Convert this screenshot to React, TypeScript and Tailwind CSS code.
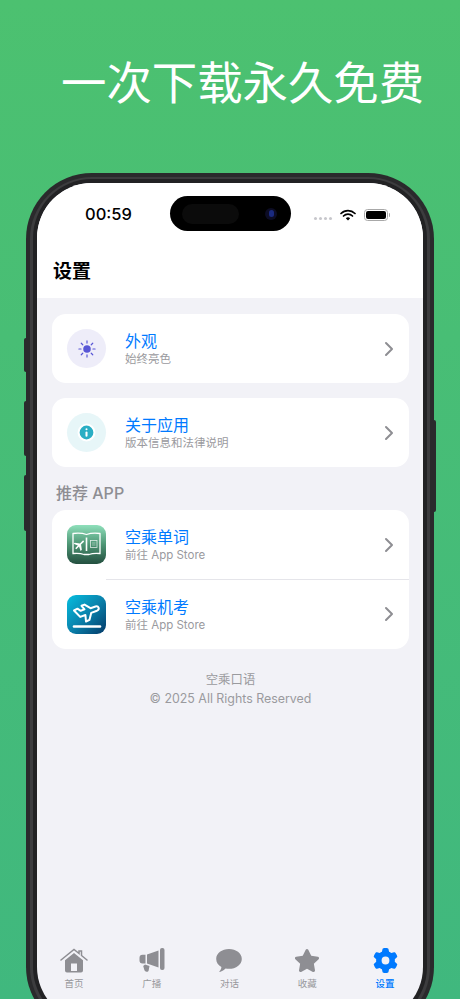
import React from "react";
import { ChevronRight, Info } from "lucide-react";
import { FaStar } from "react-icons/fa";
import { FaGear } from "react-icons/fa6";

const FONT = "font-['Inter','Noto_Sans_CJK_SC',sans-serif]";

function SunIcon() {
  return (
    <svg viewBox="0 0 20 20" className="w-[18px] h-[18px]" fill="none" stroke="#5856d6" strokeWidth="1.3" strokeLinecap="round">
      <circle cx="10" cy="10" r="4.2" fill="#5856d6" stroke="none" />
      <path d="M10 1v2.4M10 16.6V19M1 10h2.4M16.6 10H19M3.6 3.6l1.7 1.7M14.7 14.7l1.7 1.7M3.6 16.4l1.7-1.7M14.7 5.3l1.7-1.7" />
    </svg>
  );
}

function BookIcon() {
  return (
    <div className="w-[39px] h-[39px] rounded-[9px] bg-gradient-to-b from-[#8fe0bb] via-[#4d9574] to-[#245040] flex items-center justify-center">
      <svg viewBox="0 0 39 39" className="w-[39px] h-[39px]" fill="none" stroke="#fff">
        <path d="M6 8.500c4.500-.6 9.500-.4 13.500 1 4-1.400 9-1.600 13.500-1v20c-4-.4-8-.2-11 1h-5c-3-1.200-7-1.400-11-1z" strokeWidth="1.300" />
        <path d="M19.500 12.500v13.500" strokeWidth="1.600" />
        <path transform="rotate(-45 13 19.500)" d="M7 18.700h3.800l-1.900-4.200h1.700l3.100 4.200h3.800c1.100 0 1.100 1.600 0 1.600h-3.800l-3.100 4.200h-1.700l1.900-4.200H7z" fill="#fff" stroke="none" />
        <rect x="23.500" y="15.500" width="6.500" height="7" strokeWidth="0.800" opacity="0.8" />
        <path d="M25 18h3.500M25 20h3.500" strokeWidth="0.600" opacity="0.7" />
      </svg>
    </div>
  );
}

function PlaneIcon() {
  return (
    <div className="w-[39px] h-[39px] rounded-[9px] bg-gradient-to-br from-[#04bfe0] via-[#0a83ad] to-[#053a68] flex items-center justify-center">
      <svg viewBox="0 0 39 39" className="w-[39px] h-[39px]" fill="none" stroke="#fff" strokeLinejoin="round">
        <path d="M7 15.500l3.500-1.800 3.200 2.100 3.800-1.400-3-3.600 3-1.200 6 3.600 5-1.700c3-.9 4.700 2.600 1.500 4.200l-5.800 2.200-1.700 6.900-3.500 1.700-.6-6.500-5.200 1.900z" strokeWidth="2" />
        <path d="M7 31.500h26" strokeWidth="2.600" strokeLinecap="round" />
      </svg>
    </div>
  );
}

function HomeIcon() {
  return (
    <svg viewBox="0 0 28 24" className="h-[25px] w-[28px]" fill="#8e8e93">
      <path d="M1 11.500L14 1l5 4V2.500h2.500V7L27 11.500" fill="none" stroke="#8e8e93" strokeWidth="1.500" strokeLinecap="round" />
      <path fillRule="evenodd" d="M14 4.500l9 7.300V22a2 2 0 0 1-2 2H7a2 2 0 0 1-2-2V11.800zM11 15v7.500h6V15z" />
    </svg>
  );
}

function MegaphoneIcon() {
  return (
    <svg viewBox="0 0 26 25" className="h-[25px] w-[26px]" fill="#8e8e93">
      <rect x="21" y="0" width="4.500" height="22" rx="2" />
      <path d="M19.500 2.500v17L8 15.500V6.500z" />
      <path d="M6.500 6.800v8.600H3.500A3 3 0 0 1 .5 12.400V9.800a3 3 0 0 1 3-3z" />
      <path d="M6 16.500l4.500 1.600-.8 4.200c-.3 1.400-1.600 1.900-2.800 1.300-1-.5-1.400-1.300-1.700-2.200l-1-3.400z" />
    </svg>
  );
}

function ChatIcon() {
  return (
    <svg viewBox="0 0 26 24" className="h-[24px] w-[26px]" fill="#8e8e93">
      <path d="M13 0c7 0 12.800 4.300 12.800 9.900S20 19.800 13 19.800c-1.200 0-2.300-.1-3.400-.4-1.400 1.400-3.500 2.800-5.700 3.500-.5.100-.7-.3-.4-.6 1-1.100 1.700-2.400 1.900-4.400C2.300 16.400.2 13.300.2 9.900.2 4.300 6 0 13 0z" />
    </svg>
  );
}

function StatusIcons() {
  return (
    <div className="flex items-center">
      <div className="flex gap-[1.500px] mt-[8px] mr-[8px]">
        {[0, 1, 2, 3].map((i) => (
          <span key={i} className="w-[3.500px] h-[3.500px] rounded-full bg-[#c7c7cc]" />
        ))}
      </div>
      <svg viewBox="0 0 16 12" className="w-[16px] h-[12px] mr-[8px]" fill="none" stroke="#000" strokeLinecap="round">
        <path d="M1 4.500a10 10 0 0 1 14 0" strokeWidth="1.700" />
        <path d="M3.500 7a6.500 6.500 0 0 1 9 0" strokeWidth="1.700" />
        <path d="M8 11.500L5.800 9.200a3.200 3.200 0 0 1 4.400 0z" fill="#000" stroke="none" />
      </svg>
      <div className="w-[24px] h-[12px] rounded-[3.500px] border border-[#a8a8a8] p-[1px]">
        <div className="w-full h-full rounded-[2px] bg-black" />
      </div>
      <div className="w-[1px] h-[4px] bg-[#a8a8a8] ml-[1px] rounded-r-sm" />
    </div>
  );
}

function Row({ icon, title, sub, divider }: { icon: React.ReactNode; title: string; sub: string; divider?: boolean }) {
  return (
    <div className="relative flex-1 flex items-center h-[69px] pl-[15px] pr-[8px]">
      <div className="w-[39px] h-[39px] shrink-0">{icon}</div>
      <div className="ml-[19px] flex-1 min-w-0 pt-[1px]">
        <div className="text-[16px] leading-[20px] text-[#007aff]">{title}</div>
        <div className="text-[11.500px] leading-[16px] text-[#9a9a9e]">{sub}</div>
      </div>
      <ChevronRight className="w-[24px] h-[24px] text-[#8e8e93]" strokeWidth={2} />
      {divider && <div className="absolute left-[54px] right-0 bottom-0 h-px bg-[#e5e5ea]" />}
    </div>
  );
}

function Circle({ bg, children }: { bg: string; children: React.ReactNode }) {
  return <div className={`w-[39px] h-[39px] rounded-full flex items-center justify-center ${bg}`}>{children}</div>;
}

export default function App() {
  const tabs = [
    { label: "首页", icon: <HomeIcon /> },
    { label: "广播", icon: <MegaphoneIcon /> },
    { label: "对话", icon: <ChatIcon /> },
    { label: "收藏", icon: <FaStar className="w-[26px] h-[25px] text-[#8e8e93]" /> },
    { label: "设置", icon: <FaGear className="w-[25px] h-[25px] text-[#007aff]" />, active: true },
  ];

  return (
    <div className={`${FONT} h-[999px] w-[460px] overflow-hidden bg-gradient-to-b from-[#4cc170] to-[#40b87e]`}>
      <div className="h-[173px] pt-[52px] pl-[61px]">
        <h1 className="text-[45.400px] leading-[64px] font-normal text-white whitespace-nowrap">一次下载永久免费</h1>
      </div>

      {/* phone frame */}
      <div className="relative w-[408px] h-[860px] mx-auto rounded-[66px] bg-[#2a2a2c] p-[4px]">
        <span className="absolute left-[-2px] top-[165px] w-[2px] h-[34px] rounded-l-sm bg-[#2a2a2c]" />
        <span className="absolute left-[-2px] top-[228px] w-[2px] h-[55px] rounded-l-sm bg-[#2a2a2c]" />
        <span className="absolute left-[-2px] top-[302px] w-[2px] h-[56px] rounded-l-sm bg-[#2a2a2c]" />
        <span className="absolute right-[-2px] top-[247px] w-[2px] h-[92px] rounded-r-sm bg-[#2a2a2c]" />

        <div className="h-full rounded-[62px] bg-[#3c3c3e] p-[3px] pt-[2px]">
          <div className="h-full rounded-[59px] bg-[#222224] p-[4px]">
            <div className="relative h-full rounded-[55px] overflow-hidden bg-[#f2f2f7] flex flex-col">
              {/* dynamic island */}
              <div className="absolute left-[133px] top-[13px] w-[121px] h-[35px] rounded-full bg-black flex items-center justify-between pl-[12px] pr-[14px]">
                <div className="w-[57px] h-[20px] rounded-full bg-[#0b0b0b]" />
                <div className="w-[12px] h-[12px] rounded-full bg-[#0c0c24] flex items-center justify-center">
                  <div className="w-[5px] h-[7px] rounded-full bg-[#1a2a80]" />
                </div>
              </div>

              <div className="bg-white h-[115px] shrink-0">
                <div className="flex items-center justify-between h-[62px] pl-[48px] pr-[33px] pt-[1px]">
                  <span className="text-[16.500px] font-medium text-black">00:59</span>
                  <StatusIcons />
                </div>
                <div className="pl-[16px] pt-[13px] text-[19px] leading-[28px] font-bold text-black">设置</div>
              </div>

              <div className="flex-1 pl-[15px] pr-[14px] pt-[16px]">
                <div className="flex bg-white rounded-[14px]">
                  <Row icon={<Circle bg="bg-[#eeedf9]"><SunIcon /></Circle>} title="外观" sub="始终亮色" />
                </div>
                <div className="flex bg-white rounded-[14px] mt-[15px]">
                  <Row
                    icon={
                      <Circle bg="bg-[#e7f6f8]">
                        <Info className="w-[19px] h-[19px] text-white fill-[#2aaec4]" strokeWidth={2.600} />
                      </Circle>
                    }
                    title="关于应用"
                    sub="版本信息和法律说明"
                  />
                </div>
                <div className="pl-[4px] mt-[15px] mb-[6px] text-[16px] leading-[22px] font-medium text-[#8e8e93]">推荐 APP</div>
                <div className="flex flex-col h-[139px] bg-white rounded-[14px]">
                  <Row icon={<BookIcon />} title="空乘单词" sub="前往 App Store" divider />
                  <Row icon={<PlaneIcon />} title="空乘机考" sub="前往 App Store" />
                </div>
                <div className="mt-[21px] text-center text-[12.400px] leading-[19px] text-[#9a9a9e]">
                  <div>空乘口语</div>
                  <div>© 2025 All Rights Reserved</div>
                </div>
              </div>

              {/* tab bar */}
              <div className="grid grid-cols-5 ml-[-2px] mr-[-1px] h-[74px] shrink-0">
                {tabs.map((t) => (
                  <div key={t.label} className="flex flex-col items-center">
                    <div className="h-[25px] flex items-center justify-center">{t.icon}</div>
                    <div className={`mt-[4px] text-[9.500px] leading-[14px] ${t.active ? "text-[#007aff] font-medium" : "text-[#98989c]"}`}>{t.label}</div>
                  </div>
                ))}
              </div>
            </div>
          </div>
        </div>
      </div>
    </div>
  );
}
